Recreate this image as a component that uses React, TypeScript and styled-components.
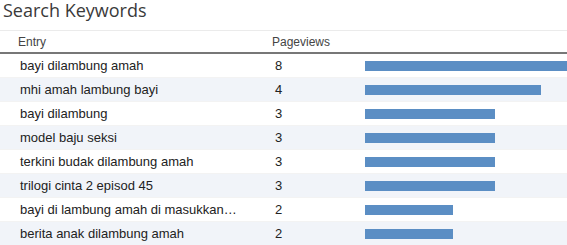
import React from "react";
import styled, { createGlobalStyle } from "styled-components";

const Global = createGlobalStyle`
  html, body { margin: 0; padding: 0; background: #fff; overflow: hidden; }
  body { font-family: "Liberation Sans", Arial, sans-serif; }
`;

const Wrap = styled.div`
  width: 567px;
  overflow: hidden;
`;

const Title = styled.h2`
  margin: 0;
  padding: 0 0 0 3px;
  height: 31px;
  box-sizing: border-box;
  font-family: "Open Sans", "Liberation Sans", sans-serif;
  font-weight: 400;
  font-size: 18px;
  line-height: 20px;
  color: #3a3a3a;
  border-bottom: 1px solid #ebebeb;
`;

const Grid = styled.div`
  display: grid;
  grid-template-columns: 272px 93px 1fr;
`;

const HeadRow = styled.div`
  display: contents;
`;

const HeadCell = styled.div<{ $pad: number }>`
  height: 21px;
  padding-left: ${(p) => p.$pad}px;
  font-size: 12px;
  line-height: 22px;
  color: #444;
  border-bottom: 2px solid #777;
`;

const Cell = styled.div<{ $alt: boolean; $pad?: number }>`
  height: 23px;
  padding-left: ${(p) => p.$pad ?? 0}px;
  background: ${(p) => (p.$alt ? "#f1f4f9" : "#fff")};
  border-bottom: 1px solid #f3f3f3;
  font-size: 13px;
  line-height: 26px;
  color: #222;
  display: flex;
  align-items: center;
  white-space: nowrap;
  overflow: hidden;
`;

const BarCell = styled(Cell)`
  overflow: visible;
`;

const Bar = styled.div`
  height: 10px;
  background: #5b8ec4;
  flex: none;
`;

const rows: [string, number][] = [
  ["bayi dilambung amah", 8],
  ["mhi amah lambung bayi", 4],
  ["bayi dilambung", 3],
  ["model baju seksi", 3],
  ["terkini budak dilambung amah", 3],
  ["trilogi cinta 2 episod 45", 3],
  ["bayi di lambung amah di masukkan…", 2],
  ["berita anak dilambung amah", 2],
];

const widthFor = (n: number) => (n === 8 ? 300 : n === 4 ? 176 : n === 3 ? 130 : 88);

export default function App() {
  return (
    <Wrap>
      <Global />
      <Title>Search Keywords</Title>
      <Grid>
        <HeadRow>
          <HeadCell $pad={18}>Entry</HeadCell>
          <HeadCell $pad={0}>Pageviews</HeadCell>
          <HeadCell $pad={0} />
        </HeadRow>
        {rows.map(([k, v], i) => (
          <React.Fragment key={k}>
            <Cell $alt={i % 2 === 1} $pad={20}>{k}</Cell>
            <Cell $alt={i % 2 === 1} $pad={3}>{v}</Cell>
            <BarCell $alt={i % 2 === 1}>
              <Bar style={{ width: widthFor(v) }} />
            </BarCell>
          </React.Fragment>
        ))}
      </Grid>
    </Wrap>
  );
}
